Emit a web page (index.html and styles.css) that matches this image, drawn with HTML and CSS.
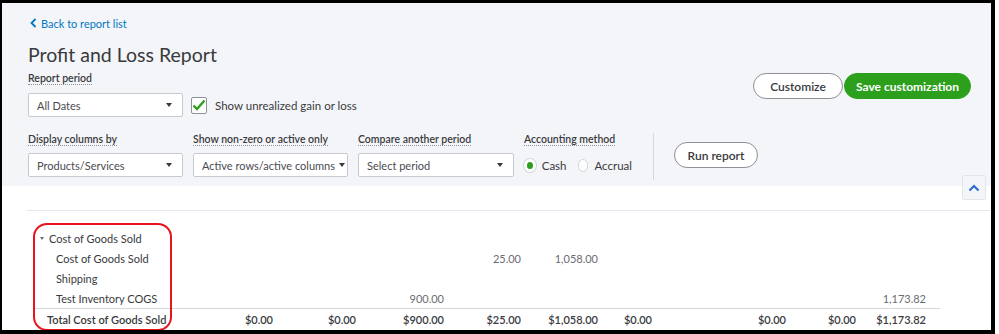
FILE: index.html
```html
<!DOCTYPE html>
<html lang="en">
<head>
    <meta charset="UTF-8">
    <meta name="viewport" content="width=device-width, initial-scale=1.0">
    <title>Profit and Loss Report</title>
    <link rel="stylesheet" href="styles.css">
</head>
<body>
    <div class="frame">
        <header class="report-header">
            <a class="back-link" href="#">
                <svg width="7" height="10" viewBox="0 0 7 10"><path d="M5.5 1 L1.5 5 L5.5 9" fill="none" stroke="#0077c5" stroke-width="1.8"/></svg>
                Back to report list
            </a>
            <div class="top-row">
                <div class="top-left">
                    <h1>Profit and Loss Report</h1>
                    <div class="field-label"><span>Report period</span></div>
                    <div class="period-row">
                        <div class="select w155">All Dates<span class="arrow"></span></div>
                        <label class="check">
                            <span class="box">
                                <svg width="14" height="12" viewBox="0 0 14 12"><path d="M1.5 6.5 L5 10 L12.5 1.5" fill="none" stroke="#2ca01c" stroke-width="2.4"/></svg>
                            </span>
                            Show unrealized gain or loss
                        </label>
                    </div>
                </div>
                <div class="actions">
                    <button class="btn customize">Customize</button>
                    <button class="btn primary">Save customization</button>
                </div>
            </div>
            <div class="options-row">
                <div class="field w155">
                    <div class="field-label"><span>Display columns by</span></div>
                    <div class="select">Products/Services<span class="arrow"></span></div>
                </div>
                <div class="field w155">
                    <div class="field-label"><span>Show non-zero or active only</span></div>
                    <div class="select">Active rows/active columns<span class="arrow"></span></div>
                </div>
                <div class="field w156">
                    <div class="field-label"><span>Compare another period</span></div>
                    <div class="select">Select period<span class="arrow"></span></div>
                </div>
                <div class="field method">
                    <div class="field-label"><span>Accounting method</span></div>
                    <div class="radios">
                        <span class="radio checked"></span><span class="radio-text">Cash</span>
                        <span class="radio"></span><span class="radio-text">Accrual</span>
                    </div>
                </div>
                <div class="divider"></div>
                <button class="btn run">Run report</button>
            </div>
        </header>
        <button class="collapse">
            <svg width="12" height="8" viewBox="0 0 12 8"><path d="M1.5 6.5 L6 2 L10.5 6.5" fill="none" stroke="#2d6fce" stroke-width="2.2"/></svg>
        </button>

        <section class="report-body">
            <div class="report-table">
                <div class="row group">
                    <div class="label"><span class="caret"></span>Cost of Goods Sold</div>
                    <div></div><div></div><div></div><div></div><div></div><div></div><div></div><div></div><div></div>
                </div>
                <div class="row sub">
                    <div class="label">Cost of Goods Sold</div>
                    <div></div><div></div><div></div><div>25.00</div><div>1,058.00</div><div></div><div></div><div></div><div></div>
                </div>
                <div class="row sub">
                    <div class="label">Shipping</div>
                    <div></div><div></div><div></div><div></div><div></div><div></div><div></div><div></div><div></div>
                </div>
                <div class="row sub">
                    <div class="label">Test Inventory COGS</div>
                    <div></div><div></div><div>900.00</div><div></div><div></div><div></div><div></div><div></div><div>1,173.82</div>
                </div>
                <div class="row total">
                    <div class="label">Total Cost of Goods Sold</div>
                    <div>$0.00</div><div>$0.00</div><div>$900.00</div><div>$25.00</div><div>$1,058.00</div><div>$0.00</div><div>$0.00</div><div>$0.00</div><div>$1,173.82</div>
                </div>
            </div>
        </section>
        <div class="highlight"></div>
    </div>
</body>
</html>
```

FILE: styles.css
```css
body {
    margin: 0;
    background: #fff;
    font-family: Lato, "Open Sans", sans-serif;
    color: #393a3d;
}
.frame {
    position: relative;
    width: 995px;
    height: 334px;
    box-sizing: border-box;
    border-style: solid;
    border-color: #000;
    border-width: 3px 4px 4px 2px;
    background: #fff;
    overflow: hidden;
}

/* header */
.report-header {
    height: 183px;
    box-sizing: border-box;
    background: #f4f5f8;
    padding: 14px 20px 0 26px;
}
.back-link {
    display: flex;
    align-items: center;
    gap: 4px;
    height: 12px;
    padding-left: 2px;
    font-size: 11px;
    color: #0077c5;
    text-decoration: none;
}
.top-row {
    display: flex;
    justify-content: space-between;
}
h1 {
    margin: 14px 0 0;
    font-size: 19.5px;
    line-height: 24px;
    font-weight: 400;
}
.field-label {
    height: 14px;
    line-height: 14px;
    font-size: 10.5px;
    font-weight: 600;
    color: #393a3d;
}
.field-label span {
    border-bottom: 1px dotted #8d9096;
}
.top-left .field-label {
    margin-top: 4px;
}
.period-row {
    display: flex;
    align-items: center;
    margin-top: 8px;
}
.select {
    display: flex;
    align-items: center;
    justify-content: space-between;
    height: 24px;
    box-sizing: border-box;
    padding: 0 10px 0 8px;
    background: #fff;
    border: 1px solid #c6c9ce;
    border-radius: 2px;
    font-size: 11px;
    color: #4a4b50;
    white-space: nowrap;
    overflow: hidden;
}
.w155 { width: 155px; }
.w156 { width: 156px; }
.arrow {
    flex: none;
    width: 0;
    height: 0;
    margin-left: 4px;
    border-left: 3px solid transparent;
    border-right: 3px solid transparent;
    border-top: 4px solid #393a3d;
}
.check {
    display: flex;
    align-items: center;
    gap: 8px;
    margin-left: 8px;
    font-size: 11.5px;
}
.box {
    display: flex;
    align-items: center;
    justify-content: center;
    width: 16px;
    height: 17px;
    box-sizing: border-box;
    background: #fff;
    border: 1px solid #8d9096;
    border-radius: 2px;
}
.actions {
    display: flex;
    gap: 1px;
    margin-top: 44px;
    align-self: flex-start;
}
.btn {
    height: 26px;
    box-sizing: border-box;
    border-radius: 13px;
    border: 1px solid #8d9096;
    background: #fff;
    font-family: Lato, "Open Sans", sans-serif;
    font-size: 12px;
    font-weight: 600;
    color: #393a3d;
    padding: 0;
}
.customize { width: 90px; }
.primary {
    width: 127px;
    background: #2ca01c;
    border-color: #2ca01c;
    color: #fff;
    font-weight: 700;
}

/* options */
.options-row {
    display: flex;
    align-items: flex-start;
    gap: 10px;
    margin-top: 15px;
}
.field {
    display: flex;
    flex-direction: column;
    gap: 7px;
}
.method {
    width: 119px;
}
.radios {
    display: flex;
    align-items: center;
    height: 24px;
    font-size: 11.5px;
}
.radio {
    width: 13px;
    height: 13px;
    box-sizing: border-box;
    border-radius: 50%;
    border: 1px solid #d4d7dc;
    background: #fff;
    margin-right: 6px;
}
.radio.checked {
    border: 3px solid #fff;
    background: #2ca01c;
    box-shadow: 0 0 0 1px #d4d7dc;
}
.radio-text {
    margin-right: 11px;
}
.divider {
    width: 1px;
    height: 47px;
    margin-top: 1px;
    background: #d4d7dc;
}
.run {
    width: 84px;
    margin-top: 10px;
    margin-left: 10px;
}
.collapse {
    position: absolute;
    right: 5px;
    top: 172px;
    width: 24px;
    height: 25px;
    padding: 0;
    display: flex;
    align-items: center;
    justify-content: center;
    background: #f4f5f8;
    border: 1px solid #e3e5e8;
    border-radius: 2px;
}

/* report */
.report-body {
    padding: 24px 1px 0 25px;
}
.report-table {
    border-top: 1px solid #e3e8f0;
    padding: 17px 0 0 8px;
}
.row {
    display: grid;
    grid-template-columns: 155px 83px 83px 88px 77px 77px 54px 134px 70px 70px;
    width: 905px;
    height: 20px;
    align-items: center;
    font-size: 11px;
    color: #6b6c72;
}
.row > div {
    text-align: right;
    white-space: nowrap;
}
.row > .label {
    text-align: left;
    color: #393a3d;
}
.group .label {
    display: flex;
    align-items: center;
    padding-left: 5px;
}
.caret {
    width: 0;
    height: 0;
    margin-right: 5px;
    border-left: 2.5px solid transparent;
    border-right: 2.5px solid transparent;
    border-top: 3px solid #6b6c72;
}
.sub .label {
    padding-left: 21px;
}
.total {
    height: 21px;
    border-top: 1px solid #d4d7dc;
    font-weight: 600;
    color: #393a3d;
}
.total .label {
    padding-left: 12px;
}
.highlight {
    position: absolute;
    left: 31px;
    top: 220px;
    width: 139px;
    height: 108px;
    box-sizing: border-box;
    border: 2px solid #e8141b;
    border-radius: 14px;
}
```
